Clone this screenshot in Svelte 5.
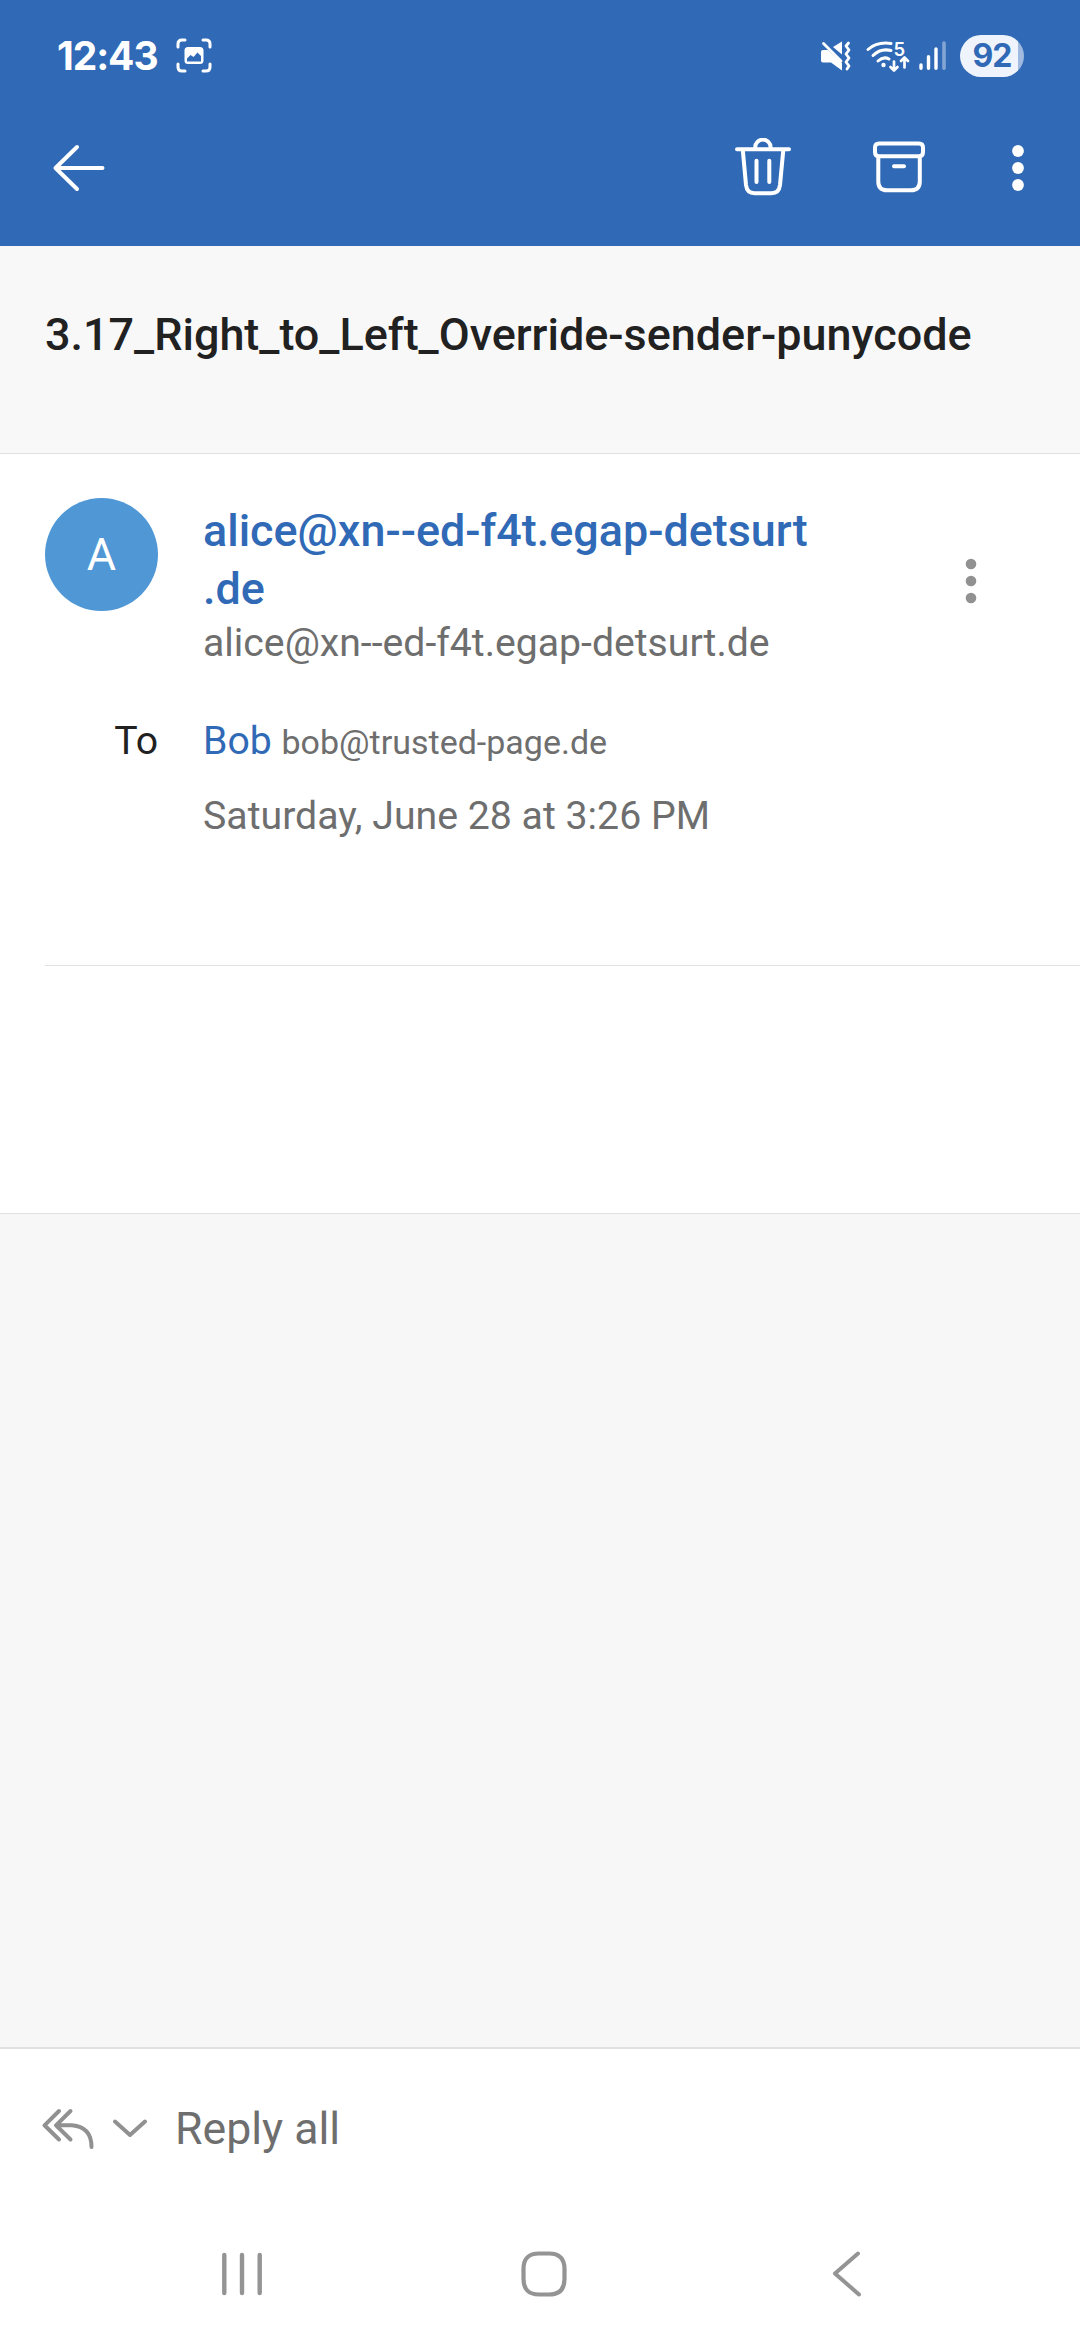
<script>
  const sender = { start: 'alice@xn--ed-f4t.egap-detsurt', end: '.de' };
  const recipient = { name: 'Bob', address: 'bob@trusted-page.de' };
</script>

<div class="screen">
  <header>
    <div class="status">
      <span class="clock">12:43</span>
      <svg class="capture" width="36" height="36" viewBox="0 0 36 36" fill="none" stroke="#fff" stroke-width="3" stroke-linecap="round">
        <path d="M2 9V6Q2 2 6 2H9M27 2H30Q34 2 34 6V9M34 26V29Q34 33 30 33H27M9 33H6Q2 33 2 29V26" />
        <path fill="#fff" stroke="none" fill-rule="evenodd" d="M12 9H24Q27.500 9 27.500 12.500V22.500Q27.500 26 24 26H12Q8.500 26 8.500 22.500V12.500Q8.500 9 12 9ZM11 23.500H25V18L21.500 14.500L17.500 19L14.500 17L11 20.500Z" />
      </svg>
      <svg class="indicators" width="134" height="40" viewBox="0 0 134 40" fill="none" stroke="#fff" stroke-width="3" stroke-linecap="round" stroke-linejoin="round">
        <path fill="#fff" stroke="none" d="M3 14H8L22 27V34.500L11 26.500H3Q1 26.500 1 24.500V16Q1 14 3 14ZM13 11L22 5.500V18.500Z" />
        <path d="M3.500 7.500L21 25M28.500 7L26 10L29 14L26 18L29 22L26 26L29 30L27 33" stroke-width="2.800" />
        <path d="M48 13.500Q57 5.500 71 7.500M53 19.500Q60.500 12 71 14.500M58 25Q63.500 20 69 23" />
        <circle cx="63.500" cy="29" r="2.200" fill="#fff" stroke="none" />
        <path d="M74 25.500V34M70.500 31L74 34.500L77.500 31M84.500 31.500V22M81 25L84.500 21.500L88 25" stroke-width="2.700" />
        <path d="M101 29V32.300M108.500 20.700V32.300M116 13V32.300" stroke-width="3.400" />
        <path d="M124 7V32.300" stroke-width="3.600" stroke-opacity=".4" />
        <text x="73.500" y="19.500" fill="#fff" stroke="none">5</text>
      </svg>
      <span class="battery">92</span>
    </div>
    <div class="toolbar">
      <svg class="back" width="54" height="48" viewBox="0 0 54 48" fill="none" stroke="#fff" stroke-width="4" stroke-linecap="round" stroke-linejoin="round">
        <path d="M25 3L3.500 24L25 45M3.500 24H50.500" />
      </svg>
      <svg class="trash" width="58" height="60" viewBox="0 0 58 60" fill="none" stroke="#fff" stroke-width="4" stroke-linecap="round" stroke-linejoin="round">
        <path d="M3 11.300H55M21.200 11V9.300A7.700 7.700 0 0 1 36.600 9.300V11M8.800 12L12 47Q13 55.200 20.500 55.200H37.500Q45 55.200 46 47L49.300 12M22.500 22.800V44M35.300 22.800V44" />
      </svg>
      <svg class="archive" width="54" height="54" viewBox="0 0 54 54" fill="none" stroke="#fff" stroke-width="4" stroke-linecap="round" stroke-linejoin="round">
        <path d="M7 2.500H47Q51 2.500 51 6.500V11Q51 15.300 47 15.300H7Q3 15.300 3 11V6.500Q3 2.500 7 2.500ZM6.300 15.500V40.500Q6.300 49.300 15 49.300H39Q47.800 49.300 47.800 40.500V15.500M22 25.300H32" />
      </svg>
      <svg class="more" width="12" height="48" viewBox="0 0 12 48" fill="#fff">
        <circle cx="6" cy="7" r="5.900" /><circle cx="6" cy="24" r="5.900" /><circle cx="6" cy="41" r="5.900" />
      </svg>
    </div>
  </header>

  <h1>3.17_Right_to_Left_Override-sender-punycode</h1>

  <main>
    <section class="details">
      <div class="from">
        <div class="avatar">A</div>
        <div class="who">
          <div class="name">{sender.start}<wbr />{sender.end}</div>
          <div class="address">{sender.start}{sender.end}</div>
        </div>
        <svg class="dots" width="12" height="48" viewBox="0 0 12 48" fill="#919191">
          <circle cx="6" cy="7" r="5.300" /><circle cx="6" cy="24" r="5.300" /><circle cx="6" cy="41" r="5.300" />
        </svg>
      </div>
      <div class="to">
        <span class="label">To</span>
        <span class="bob">{recipient.name} <small>{recipient.address}</small></span>
      </div>
      <div class="date">Saturday, June 28 at 3:26 PM</div>
    </section>
  </main>

  <div class="empty"></div>

  <footer>
    <div class="reply">
      <svg width="54" height="42" viewBox="0 0 54 42" fill="none" stroke="#919191" stroke-width="4" stroke-linecap="round" stroke-linejoin="round">
        <path d="M18 3L3.500 17.300L18 31.500M29.500 3L15 17.300L29.500 31.500M15 17.300H31Q50.500 19 50.500 39" />
      </svg>
      <svg class="chevron" width="36" height="20" viewBox="0 0 36 20" fill="none" stroke="#919191" stroke-width="4" stroke-linecap="round" stroke-linejoin="round">
        <path d="M3 2.500L18 16L33 2.500" />
      </svg>
      <span>Reply all</span>
    </div>
    <nav>
      <svg width="42" height="44" viewBox="0 0 42 44" stroke="#949494" stroke-width="4.400" stroke-linecap="round">
        <path d="M3.300 3V41M21 3V41M38.700 3V41" />
      </svg>
      <svg class="home" width="46" height="46" viewBox="0 0 46 46" fill="none" stroke="#949494" stroke-width="4.200">
        <path d="M18 2.500H28Q43.500 2.500 43.500 18V28Q43.500 43.500 28 43.500H18Q2.500 43.500 2.500 28V18Q2.500 2.500 18 2.500Z" />
      </svg>
      <svg class="previous" width="30" height="46" viewBox="0 0 30 46" fill="none" stroke="#949494" stroke-width="4" stroke-linecap="round" stroke-linejoin="round">
        <path d="M26 2.500L3 22.500L27 43.500" />
      </svg>
    </nav>
  </footer>
</div>

<style>
  :global(body) { background: #fff; }
  .screen {
    width: 1080px;
    height: 2340px;
    display: flex;
    flex-direction: column;
    overflow: hidden;
    font-family: Roboto, sans-serif;
    color: #212121;
  }
  svg { display: block; flex: none; }
  header { height: 246px; background: #306ab6; flex: none; }
  .status { display: flex; align-items: center; height: 112px; padding: 0 56px 0 57px; box-sizing: border-box; }
  .clock {
    width: 102px;
    margin-right: 17px;
    font: 700 39px/48px Inter, sans-serif;
    letter-spacing: -1.100px;
    color: #fff;
    white-space: nowrap;
  }
  .indicators { margin-left: auto; }
  .indicators text { font: 600 18.500px Inter, sans-serif; }
  .battery {
    width: 64px;
    height: 42px;
    margin-left: 6px;
    border-radius: 21px;
    background: linear-gradient(90deg, #eff3fb 58px, #a0b9df 58px);
    color: #306ab6;
    font: 700 32px/42px Inter, sans-serif;
    letter-spacing: -1px;
    text-align: center;
  }
  .toolbar { display: flex; align-items: center; height: 112px; padding: 0 56px 0 52px; }
  .trash { margin-left: auto; }
  .archive { margin-left: 80px; }
  .more { margin-left: 86px; }
  h1 {
    margin: 0;
    height: 208px;
    box-sizing: border-box;
    padding: 60px 45px 0;
    border-bottom: 1px solid #e1e1e1;
    background: #f8f8f8;
    font-size: 44.930px;
    font-weight: 500;
    line-height: 58px;
    white-space: nowrap;
    flex: none;
  }
  main { height: 759px; flex: none; background: #fff; }
  .details { margin-left: 45px; height: 512px; box-sizing: border-box; border-bottom: 1px solid #e1e1e1; padding-top: 44px; }
  .from { display: flex; }
  .avatar {
    width: 113px;
    height: 113px;
    border-radius: 50%;
    background: #5097d5;
    color: #fff;
    font-size: 45px;
    line-height: 113px;
    text-align: center;
    flex: none;
  }
  .who { width: 610px; margin: 4px 0 0 45px; }
  .name { font-size: 44.900px; font-weight: 500; line-height: 58px; color: #306ab6; }
  .address { margin-top: -1px; font-size: 39.180px; line-height: 52px; color: #6e6e6e; white-space: nowrap; }
  .dots { margin: 59px 0 0 152px; }
  .to { display: flex; align-items: baseline; margin-top: 46px; font-size: 39.200px; line-height: 52px; }
  .label { width: 113px; text-align: right; }
  .bob { margin-left: 45px; color: #306ab6; white-space: nowrap; }
  small { font-size: 34px; color: #6e6e6e; }
  .date { margin: 22px 0 0 158px; font-size: 39.250px; line-height: 52px; color: #6e6e6e; }
  .empty { flex: 1; background: #f7f7f7; border-top: 1px solid #e1e1e1; border-bottom: 2px solid #e1e1e1; }
  footer { height: 291px; flex: none; background: #fff; }
  .reply { display: flex; align-items: center; height: 159px; padding-left: 41px; font-size: 44.600px; color: #6e6e6e; }
  .chevron { margin: 0 27px 0 17px; }
  nav { display: flex; align-items: center; padding: 43px 0 0 221px; }
  .home { margin-left: 258px; }
  .previous { margin-left: 265px; }
</style>
